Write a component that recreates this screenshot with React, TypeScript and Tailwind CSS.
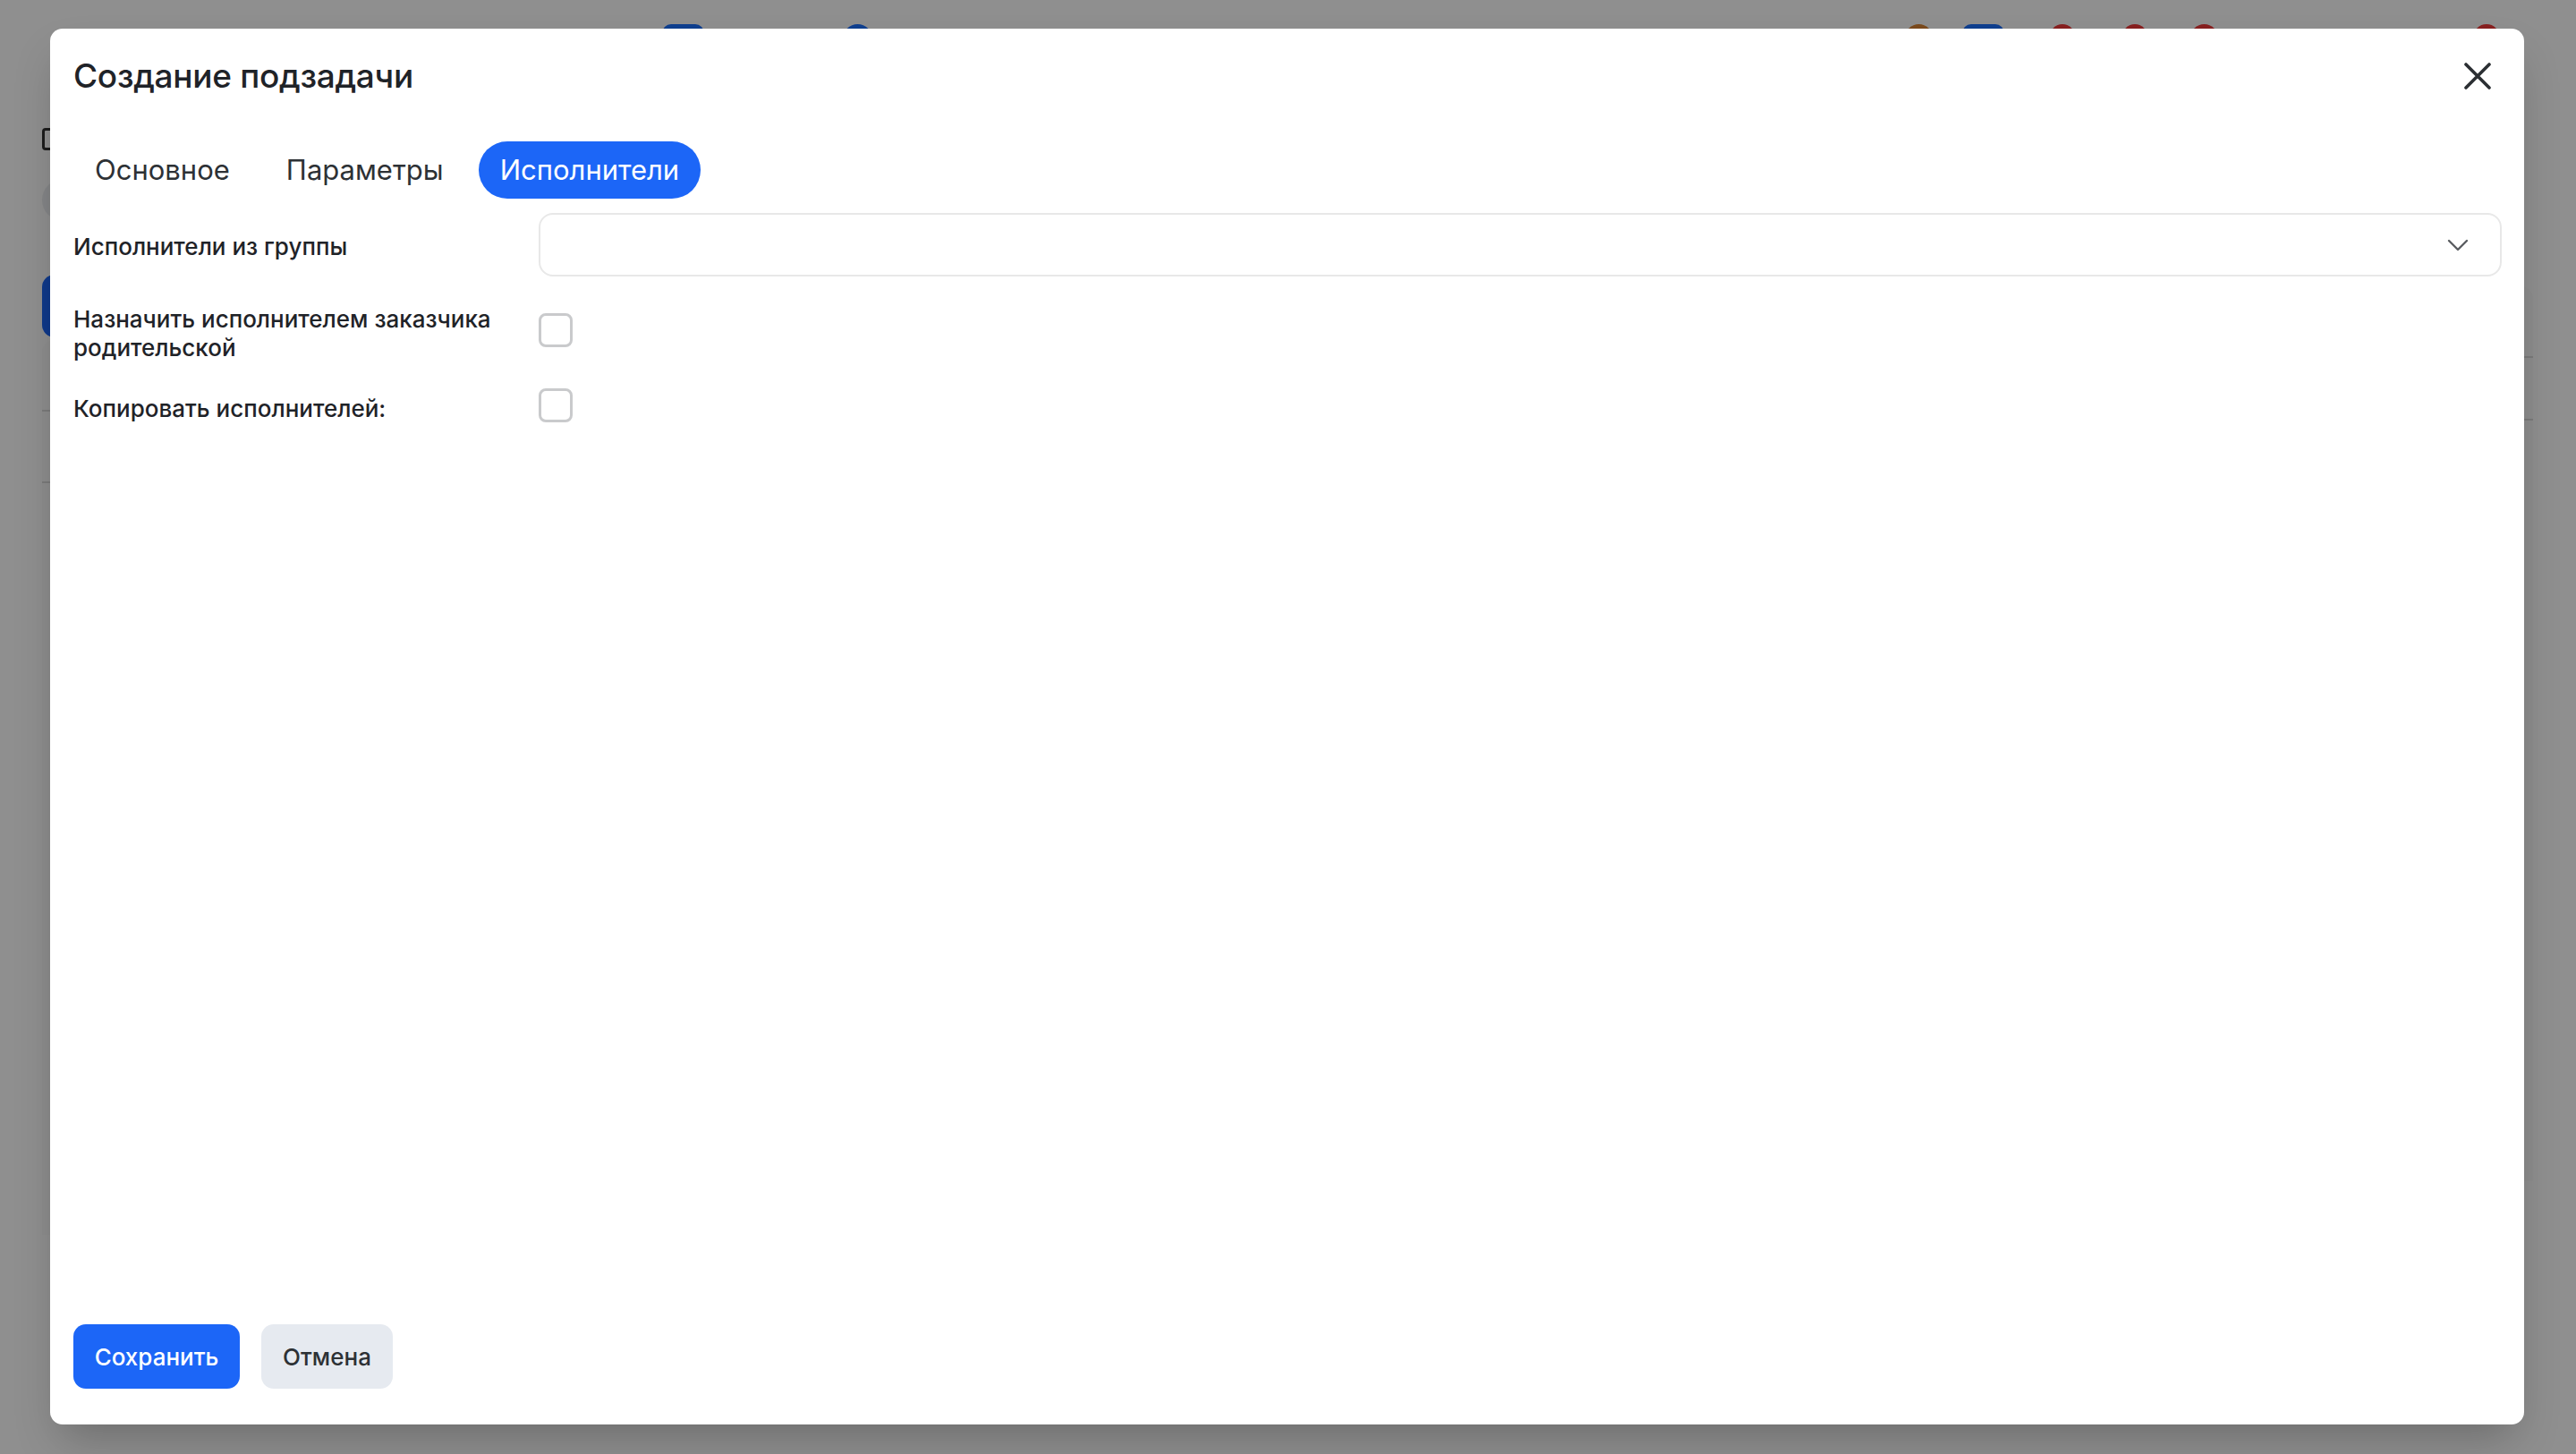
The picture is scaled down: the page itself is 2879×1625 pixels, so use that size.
import { useState } from 'react';

const TABS = ['Основное', 'Параметры', 'Исполнители'];

function CloseIcon() {
  return (
    <svg width="30" height="30" viewBox="0 0 30 30" fill="none">
      <path d="M2 2L28 28M28 2L2 28" stroke="#2b2f33" strokeWidth="3.6" strokeLinecap="round" />
    </svg>
  );
}

function ChevronDown() {
  return (
    <svg width="24" height="14" viewBox="0 0 24 14" fill="none">
      <path d="M2 2L12 12L22 2" stroke="#5a5d61" strokeWidth="2.4" strokeLinecap="round" strokeLinejoin="round" />
    </svg>
  );
}

function Checkbox({ checked, onChange, className = '' }: { checked: boolean; onChange: () => void; className?: string }) {
  return (
    <button
      type="button"
      onClick={onChange}
      className={`flex h-[38px] w-[38px] shrink-0 items-center justify-center rounded-[8px] border-[3px] border-[#c9cacc] bg-white ${className}`}
    >
      {checked && <span className="h-[16px] w-[16px] rounded-[3px] bg-[#1c66f7]" />}
    </button>
  );
}

// Dimmed page behind the dialog
function BackgroundPage() {
  return (
    <div className="flex h-full w-full flex-col bg-white">
      {/* top toolbar */}
      <div className="flex h-[60px] items-start pt-[27px]">
        <div className="ml-[740px] h-[40px] w-[47px] rounded-[10px] bg-[#1c70ff]" />
        <div className="ml-[155px] h-[40px] w-[33px] rounded-full bg-[#1c70ff]" />
        <div className="ml-[1154px] h-[40px] w-[31px] rounded-full bg-[#db8534]" />
        <div className="ml-[33px] h-[40px] w-[47px] rounded-[10px] bg-[#1c70ff]" />
        <div className="ml-[51px] h-[40px] w-[28px] rounded-full bg-[#f23a3a]" />
        <div className="ml-[53px] h-[40px] w-[28px] rounded-full bg-[#f23a3a]" />
        <div className="ml-[48px] h-[40px] w-[31px] rounded-full bg-[#f23a3a]" />
        <div className="ml-[285px] h-[40px] w-[30px] rounded-full bg-[#f23a3a]" />
      </div>
      <div className="flex flex-1 pl-[47px] pr-[48px]">
        {/* left rail */}
        <div className="flex w-[400px] flex-col">
          <div className="mt-[83px] h-[25px] w-[24px] rounded-[4px] border-[3px] border-[#333]" />
          <div className="mt-[32px] h-[47px] w-[47px] rounded-full bg-[#eceef0]" />
          <div className="mt-[60px] h-[70px] w-[200px] rounded-[14px] bg-[#1c66f7]" />
          <div className="mt-[3px] flex h-[1000px] flex-col rounded-t-[14px] bg-[#fbfbfb]">
            <div className="mt-[78px] h-[2px] bg-[#dcdcdc]" />
            <div className="mt-[78px] h-[2px] bg-[#dcdcdc]" />
          </div>
        </div>
        <div className="flex-1" />
        <div className="flex w-[300px] flex-col">
          <div className="mt-[260px] flex h-[1000px] flex-col rounded-t-[14px] bg-[#fbfbfb]">
            <div className="mt-[78px] h-[2px] bg-[#dcdcdc]" />
            <div className="mt-[68px] h-[2px] bg-[#dcdcdc]" />
          </div>
        </div>
      </div>
    </div>
  );
}

export default function App() {
  const [activeTab, setActiveTab] = useState(2);
  const [assignParent, setAssignParent] = useState(false);
  const [copyAssignees, setCopyAssignees] = useState(false);

  return (
    <div
      className="relative h-[1625px] w-[2879px] overflow-hidden"
      style={{ fontFamily: 'Inter, "Noto Sans", sans-serif' }}
    >
      <BackgroundPage />

      {/* overlay */}
      <div className="absolute inset-0 bg-[rgba(0,0,0,0.44)]" />

      {/* dialog */}
      <div className="absolute left-[56px] top-[32px] flex h-[1560px] w-[2765px] flex-col rounded-[14px] bg-white pb-[40px] pl-[26px] pr-[25px] pt-[33px] shadow-2xl">
        <div className="flex items-center justify-between">
          <h2 className="text-[37px] font-medium leading-[40px] tracking-[-0.3px] text-[#1f2328]">
            Создание подзадачи
          </h2>
          <button type="button" className="mr-[12px] flex h-[30px] w-[30px] items-center justify-center">
            <CloseIcon />
          </button>
        </div>

        <div className="mt-[53px] flex gap-[15px]">
          {TABS.map((tab, i) => (
            <button
              key={tab}
              type="button"
              onClick={() => setActiveTab(i)}
              className={
                i === activeTab
                  ? 'h-[64px] rounded-full bg-[#1c66f7] px-[24px] text-[31px] leading-[64px] text-white'
                  : 'h-[64px] rounded-full px-[24px] text-[31px] leading-[64px] text-[#2d3135]'
              }
            >
              {tab}
            </button>
          ))}
        </div>

        <div className="mt-[16px] flex items-center">
          <div className="w-[520px] shrink-0 pt-[4px] text-[26px] font-medium leading-[32px] text-[#1f2328]">
            Исполнители из группы
          </div>
          <button
            type="button"
            className="flex h-[71px] flex-1 items-center justify-end rounded-[16px] border-2 border-[#e8e8e8] bg-white pr-[35px]"
          >
            <ChevronDown />
          </button>
        </div>

        <div className="mt-[28px] flex items-center">
          <div className="w-[520px] shrink-0 pt-[4px] text-[26px] font-medium leading-[32px] text-[#1f2328]">
            Назначить исполнителем заказчика
            <br />
            родительской
          </div>
          <Checkbox checked={assignParent} onChange={() => setAssignParent(!assignParent)} className="-mt-[4px]" />
        </div>

        <div className="mt-[32px] flex items-center">
          <div className="w-[520px] shrink-0 pt-[4px] text-[26px] font-medium leading-[32px] text-[#1f2328]">
            Копировать исполнителей:
          </div>
          <Checkbox checked={copyAssignees} onChange={() => setCopyAssignees(!copyAssignees)} className="-mt-[4px]" />
        </div>

        <div className="flex-1" />

        <div className="flex gap-[24px]">
          <button
            type="button"
            className="h-[72px] w-[186px] rounded-[14px] bg-[#1c66f7] text-[26px] font-medium text-white"
          >
            Сохранить
          </button>
          <button
            type="button"
            className="h-[72px] w-[147px] rounded-[14px] bg-[#e6eaf0] text-[26px] font-medium text-[#2d3135]"
          >
            Отмена
          </button>
        </div>
      </div>
    </div>
  );
}
